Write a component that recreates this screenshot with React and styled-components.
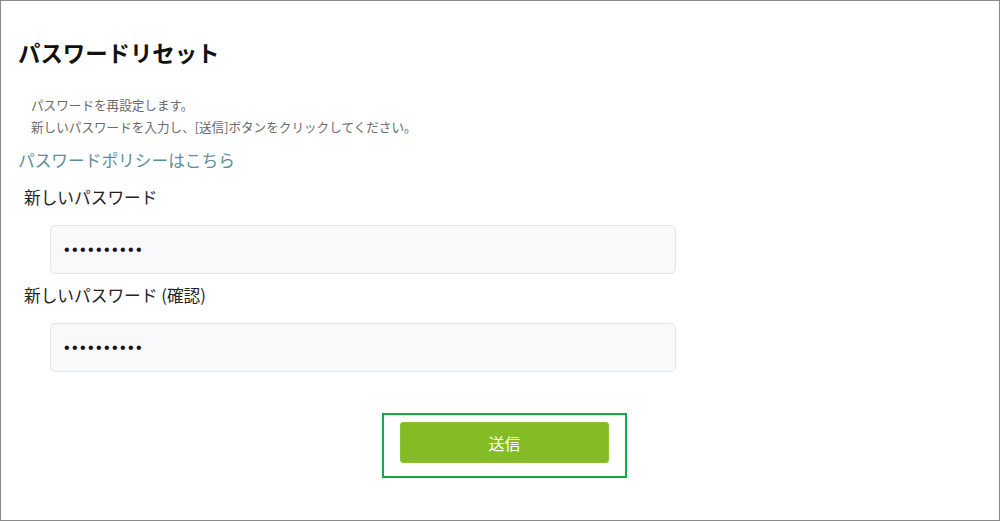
import React from "react";
import styled, { createGlobalStyle } from "styled-components";

const GlobalStyle = createGlobalStyle`
  html, body {
    margin: 0;
    padding: 0;
    background: #fff;
  }
  body {
    font-family: "Noto Sans CJK JP", "Noto Sans", sans-serif;
    color: #222;
  }
`;

const fields = [
  { id: "new-password", label: "新しいパスワード" },
  { id: "confirm-password", label: "新しいパスワード (確認)" },
];

const App = () => {
  return (
    <>
      <GlobalStyle />
      <Card>
        <Title>パスワードリセット</Title>
        <Description>
          パスワードを再設定します。
          <br />
          新しいパスワードを入力し、[送信]ボタンをクリックしてください。
        </Description>
        <PolicyLink href="#">パスワードポリシーはこちら</PolicyLink>
        {fields.map((field, i) => (
          <Field key={field.id} $first={i === 0}>
            <Label htmlFor={field.id}>{field.label}</Label>
            <PasswordInput
              id={field.id}
              type="password"
              defaultValue="0123456789"
              readOnly
            />
          </Field>
        ))}
        <ButtonRow>
          <Highlight>
            <SubmitButton type="button">送信</SubmitButton>
          </Highlight>
        </ButtonRow>
      </Card>
    </>
  );
};

export default App;

const Card = styled.div`
  box-sizing: border-box;
  width: 1000px;
  height: 521px;
  border: 1px solid #8a8a8a;
  padding: 36px 0 0 17px;
  display: flex;
  flex-direction: column;
  align-items: flex-start;
`;

const Title = styled.h1`
  margin: 0;
  font-size: 22.4px;
  line-height: 30px;
  font-weight: 700;
  color: #111;
`;

const Description = styled.p`
  margin: 27px 0 0 13px;
  font-size: 12.6px;
  line-height: 22px;
  color: #6a6a6a;
`;

const PolicyLink = styled.a`
  margin: 10px 0 0 0;
  font-size: 16.7px;
  line-height: 24px;
  color: #5b8e9b;
  text-decoration: none;
`;

const Field = styled.div`
  display: flex;
  flex-direction: column;
  align-items: flex-start;
  margin-top: ${(p) => (p.$first ? "13px" : "9px")};
`;

const Label = styled.label`
  margin-left: 6px;
  font-size: 16.7px;
  line-height: 24px;
  color: #222;
`;

const PasswordInput = styled.input`
  box-sizing: border-box;
  margin: 16px 0 0 32px;
  width: 626px;
  height: 49px;
  padding: 0 13px;
  background: #f8f9fb;
  border: 1px solid #e3e5e9;
  border-radius: 5px;
  font-family: "Liberation Sans", sans-serif;
  font-size: 16px;
  letter-spacing: 2.4px;
  color: #111;
  outline: none;
`;

const ButtonRow = styled.div`
  align-self: stretch;
  display: flex;
  justify-content: center;
  padding-right: 8px;
  margin-top: 41px;
`;

const Highlight = styled.div`
  border: 2px solid #10ad44;
  padding: 7px 16px 13px 16px;
`;

const SubmitButton = styled.button`
  width: 209px;
  height: 41px;
  border: 1px solid #8cc238;
  border-radius: 3px;
  background: #85bb25;
  color: #fff;
  font-family: "Noto Sans CJK JP", sans-serif;
  font-size: 16px;
  cursor: pointer;
`;
